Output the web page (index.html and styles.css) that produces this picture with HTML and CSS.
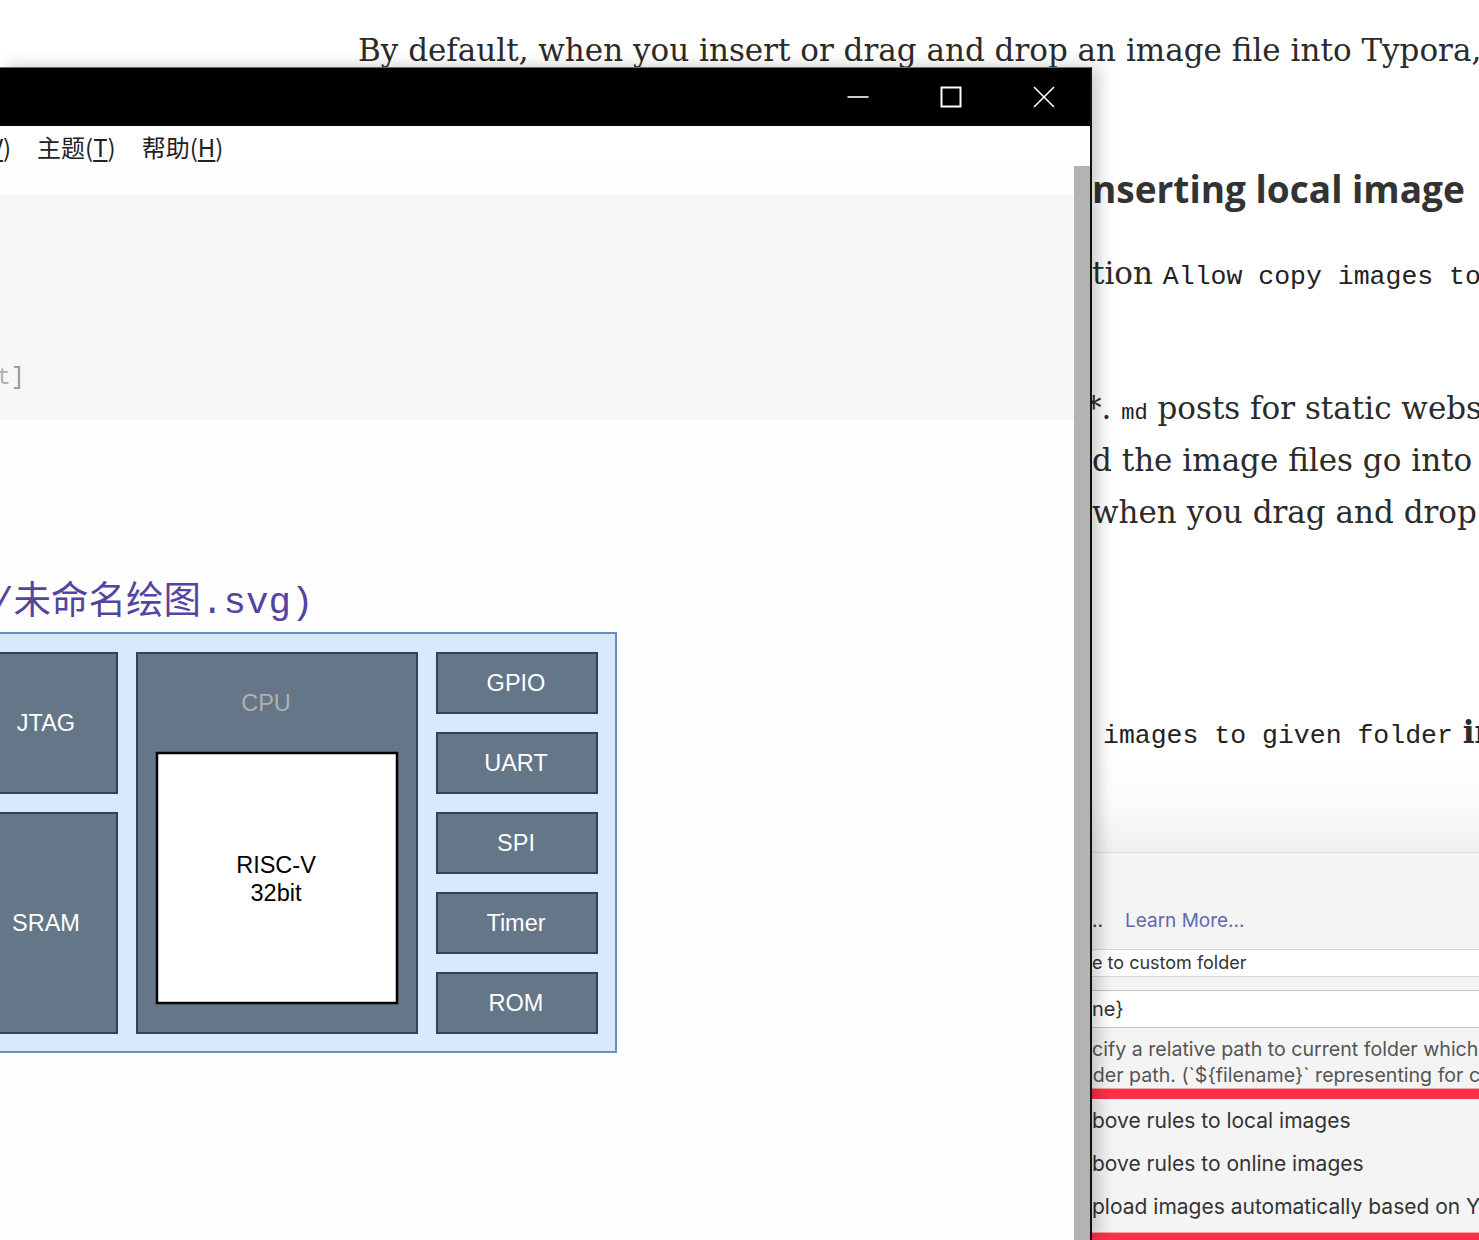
FILE: index.html
```html
<!DOCTYPE html>
<html lang="en">
<head>
<meta charset="utf-8">
<title>Typora images</title>
<link rel="stylesheet" href="styles.css">
</head>
<body>
<div class="doc">
  <p class="intro">By default, when you insert or drag and drop an image file into Typora,</p>
  <div class="side">
    <h2 class="heading">nserting local image</h2>
    <p class="line l1">tion <span class="mono">Allow copy images to</span></p>
    <p class="line l2">*. <span class="mono small">md</span> posts for static webs</p>
    <p class="line">d the image files go into</p>
    <p class="line">when you drag and drop</p>
    <p class="line l5"><span class="mono">images to given folder</span> <b>in</b></p>
    <div class="fade"></div>
    <div class="prefs">
      <div class="learn"><span class="dots">..</span><span class="link">Learn More...</span></div>
      <div class="select-row">e to custom folder</div>
      <div class="input-row">ne}</div>
      <div class="desc">
        <div>cify a relative path to current folder which</div>
        <div class="cut">lder path. (`${filename}` representing for c</div>
      </div>
      <div class="redbar"></div>
      <div class="opt">bove rules to local images</div>
      <div class="opt">bove rules to online images</div>
      <div class="opt">pload images automatically based on YAML</div>
      <div class="redbar"></div>
    </div>
  </div>
</div>

<div class="window">
  <div class="titlebar">
    <div class="tb-btn">
      <svg width="24" height="24" viewBox="0 0 24 24"><path d="M1.5 12H22.5" stroke="#fff" stroke-width="1.6" fill="none"/></svg>
    </div>
    <div class="tb-btn">
      <svg width="24" height="24" viewBox="0 0 24 24"><rect x="2.5" y="2.5" width="19" height="19" stroke="#fff" stroke-width="2" fill="none"/></svg>
    </div>
    <div class="tb-btn">
      <svg width="24" height="24" viewBox="0 0 24 24"><path d="M2 2L22 22M22 2L2 22" stroke="#fff" stroke-width="1.6" fill="none"/></svg>
    </div>
  </div>
  <div class="menubar">
    <span class="menu-item">视图(<u>V</u>)</span>
    <span class="menu-item">主题(<u>T</u>)</span>
    <span class="menu-item">帮助(<u>H</u>)</span>
  </div>
  <div class="editor">
    <div class="editor-main">
      <div class="codeblock"><span class="code-t">t</span><span class="code-b">]</span></div>
      <div class="src-link">/未命名绘图.svg)</div>
      <svg class="diagram" width="618" height="423" viewBox="0 631 618 423">
        <rect x="-45" y="633" width="661" height="419" fill="#dae8fc" stroke="#6c8ebf" stroke-width="2"/>
        <g fill="#647687" stroke="#314354" stroke-width="2">
          <rect x="-25" y="653" width="142" height="140"/>
          <rect x="-25" y="813" width="142" height="220"/>
          <rect x="137" y="653" width="280" height="380"/>
          <rect x="437" y="653" width="160" height="60"/>
          <rect x="437" y="733" width="160" height="60"/>
          <rect x="437" y="813" width="160" height="60"/>
          <rect x="437" y="893" width="160" height="60"/>
          <rect x="437" y="973" width="160" height="60"/>
        </g>
        <rect x="157" y="753" width="240" height="250" fill="#fff" stroke="#000" stroke-width="2.5"/>
        <g class="dg-label" fill="#fff" text-anchor="middle">
          <text x="46" y="731">JTAG</text>
          <text x="46" y="931">SRAM</text>
          <text x="516" y="691">GPIO</text>
          <text x="516" y="771">UART</text>
          <text x="516" y="851">SPI</text>
          <text x="516" y="931">Timer</text>
          <text x="516" y="1011">ROM</text>
        </g>
        <text class="dg-label" x="266" y="711" fill="#b0b0b0" text-anchor="middle">CPU</text>
        <text class="dg-label" x="276" y="873" fill="#000" text-anchor="middle">RISC-V</text>
        <text class="dg-label" x="276" y="901" fill="#000" text-anchor="middle">32bit</text>
      </svg>
    </div>
    <div class="scrollbar"></div>
  </div>
</div>
</body>
</html>
```

FILE: styles.css
```css
* { box-sizing: border-box; }
html, body { margin: 0; padding: 0; }
body {
  width: 1479px;
  height: 1240px;
  overflow: hidden;
  position: relative;
  background: #ffffff;
  font-family: "DejaVu Serif", "Liberation Serif", serif;
  color: #2b2b2b;
}

/* background document */
.doc { padding-top: 24px; }
.intro {
  margin: 0 0 0 358px;
  font-size: 31px;
  line-height: 52px;
  white-space: nowrap;
}
.side {
  margin-left: 1092px;
  width: 387px;
  overflow: hidden;
  white-space: nowrap;
}
.heading {
  margin: 88px 0 0;
  font-family: "Open Sans", "DejaVu Sans", sans-serif;
  font-weight: 700;
  font-size: 37px;
  line-height: 50px;
  color: #333;
}
.line {
  margin: 0;
  font-size: 31px;
  line-height: 52px;
  height: 52px;
}
.l1 { margin-top: 33px; }
.l2 { margin-top: 83px; text-indent: -6px; }
.l5 { margin-top: 168px; padding-left: 11px; }
.mono {
  font-family: "Liberation Mono", monospace;
  font-size: 26.5px;
  line-height: 1;
  color: #222;
}
.mono.small { font-size: 22px; }
.line b { font-weight: 700; line-height: 1; }

.fade {
  height: 94px;
  background: linear-gradient(to bottom, #ffffff 0%, #fbfbfb 50%, #f0f0f0 100%);
}
.prefs {
  background: #f4f4f4;
  border-top: 1px solid #dcdcdc;
  font-family: "Inter", "Open Sans", sans-serif;
  color: #333;
  padding-top: 56px;
}
.learn {
  font-size: 19px;
  line-height: 24px;
  display: flex;
  gap: 22px;
}
.dots { color: #333; }
.link { color: #6468a8; }
.select-row {
  margin-top: 16px;
  height: 28px;
  background: #fff;
  border-top: 1px solid #d8d8d8;
  border-bottom: 1px solid #d8d8d8;
  font-size: 18px;
  line-height: 26px;
}
.input-row {
  margin-top: 13px;
  height: 38px;
  background: #fff;
  border-top: 1px solid #c4c4c4;
  border-bottom: 1px solid #c4c4c4;
  font-size: 20px;
  line-height: 36px;
}
.desc {
  margin-top: 8px;
  font-size: 19.6px;
  line-height: 26px;
  color: #555;
}
.desc .cut { text-indent: -4px; }
.redbar {
  height: 11px;
  background: #fb3245;
  border-top: 1px solid #f6a0a6;
}
.opt {
  font-size: 21px;
  line-height: 43px;
  color: #333;
}
.opt + .redbar { margin-top: 4px; }

/* overlaid app window */
.window {
  position: absolute;
  left: 0;
  top: 67px;
  bottom: 0;
  width: 1092px;
  background: #fefefe;
  border-top: 1px solid #6b6b6b;
  border-right: 2px solid #111;
  box-shadow: 6px 0 16px rgba(0, 0, 0, 0.22);
  display: flex;
  flex-direction: column;
}
.titlebar {
  height: 58px;
  background: #000;
  display: flex;
  justify-content: flex-end;
  flex-shrink: 0;
}
.tb-btn {
  width: 93px;
  display: flex;
  align-items: center;
  justify-content: center;
}
.menubar {
  height: 40px;
  flex-shrink: 0;
  background: #fff;
  display: flex;
  align-items: center;
  gap: 26px;
  margin-left: -67px;
  font-family: "Noto Sans CJK SC", "Noto Sans", sans-serif;
  font-size: 24px;
  color: #222;
}
.menu-item u { text-underline-offset: 3px; }
.editor {
  flex: 1;
  display: flex;
  min-height: 0;
}
.editor-main {
  flex: 1;
  overflow: hidden;
  padding-top: 29px;
}
.scrollbar {
  width: 16px;
  background: #b3b3b3;
}
.codeblock {
  height: 225px;
  background: #f7f7f7;
  padding-top: 165px;
  font-family: "Liberation Mono", monospace;
  font-size: 23px;
  line-height: 36px;
  margin-left: -3px;
}
.code-t { color: #a8b4bc; }
.code-b { color: #999; }
.src-link {
  margin-top: 161px;
  font-family: "Liberation Mono", "Noto Sans CJK SC", monospace;
  font-size: 37.5px;
  line-height: 44px;
  height: 44px;
  color: #53459d;
  white-space: nowrap;
  text-indent: -9px;
}
.diagram {
  display: block;
  margin-top: 6px;
  overflow: visible;
}
.dg-label {
  font-family: "Liberation Sans", Arial, sans-serif;
  font-size: 23.5px;
}
```
